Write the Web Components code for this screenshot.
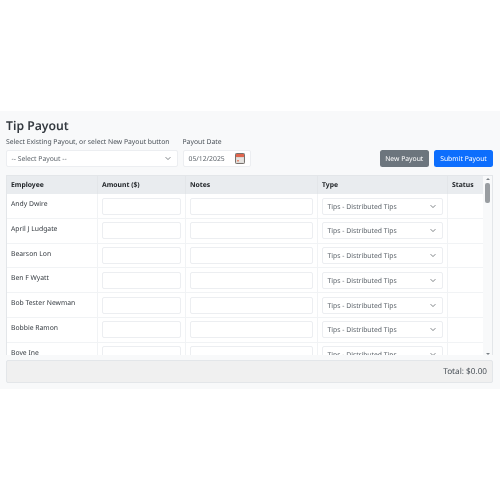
<!DOCTYPE html>
<html lang="en">
<head>
  <meta charset="UTF-8">
  <title>Tip Payout</title>
  <style>
    html, body { margin: 0; background: #fff; }
    body { padding-top: 111px; font-family: "Noto Sans", sans-serif; color: #212529; text-rendering: geometricPrecision; }
  </style>
</head>
<body>
  <tip-payout></tip-payout>

  <script>
    const chevron = `<svg width="6" height="5" viewBox="0 0 16 14"><path fill="none" stroke="#4a5056" stroke-linecap="round" stroke-linejoin="round" stroke-width="2" d="m2 4 6 6 6-6"/></svg>`;

    // dropdown look-alike, the text comes through the slot
    class TpSelect extends HTMLElement {
      constructor() {
        super();
        this.attachShadow({ mode: 'open' }).innerHTML = `
          <style>
            :host {
              display: flex; align-items: center; justify-content: space-between;
              box-sizing: border-box; height: 17px; padding: 0 6px 0 4.5px;
              background: #fff; border: 1px solid #eceef1; border-radius: 2px;
              font-size: 6.8px; color: #5c636a; white-space: nowrap; overflow: hidden;
            }
          </style>
          <slot></slot>${chevron}`;
      }
    }

    class TpButton extends HTMLElement {
      constructor() {
        super();
        this.attachShadow({ mode: 'open' }).innerHTML = `
          <style>
            :host {
              display: flex; align-items: center; justify-content: center;
              box-sizing: border-box; height: 17.5px;
              border-radius: 2.5px; font-size: 6.8px; color: #fff;
              background: #6c757d;
            }
            :host([primary]) { background: #0d6efd; }
          </style>
          <slot></slot>`;
      }
    }

    class TpField extends HTMLElement {
      constructor() {
        super();
        this.attachShadow({ mode: 'open' }).innerHTML = `
          <style>
            :host { display: flex; flex-direction: column; gap: 3px; }
            label { font-size: 6.8px; line-height: 10px; color: #495057; white-space: nowrap; }
          </style>
          <label>${this.getAttribute('label')}</label>
          <slot></slot>`;
      }
    }

    class TpDate extends HTMLElement {
      constructor() {
        super();
        this.attachShadow({ mode: 'open' }).innerHTML = `
          <style>
            :host {
              display: flex; align-items: center; justify-content: space-between;
              box-sizing: border-box; width: 68px; height: 17px; padding: 0 5px;
              background: #fff; border: 1px solid #eceef1; border-radius: 2px;
              font-size: 6.8px; color: #5c636a;
            }
          </style>
          <span>${this.getAttribute('value')}</span>
          <svg width="10" height="11" viewBox="0 0 10 11">
            <rect x=".5" y=".5" width="9" height="10" rx=".8" fill="#d9d6d3" stroke="#77716d"/>
            <rect x="1" y="1" width="8" height="3" fill="#e0654d"/>
            <rect x="1.5" y="5" width="7" height="4.5" fill="#e6e3e0"/>
            <rect x="2" y="7" width="2" height="1.5" fill="#e58a70"/>
          </svg>`;
      }
    }

    class TpRow extends HTMLElement {
      constructor() {
        super();
        this.attachShadow({ mode: 'open' }).innerHTML = `
          <style>
            :host {
              display: grid; grid-template-columns: 91px 88px 132px 130px 1fr;
              height: 24.8px; box-sizing: border-box;
              background: #fff; border-bottom: 1px solid #f1f3f5;
              font-size: 6.8px; color: #343a40;
            }
            div { box-sizing: border-box; padding: 3.5px 4px 0; border-right: 1px solid #f1f3f5; min-width: 0; }
            div:last-child { border-right: 0; }
            .name { padding: 5px 4px 0; line-height: 10px; white-space: nowrap; }
            input {
              display: block; box-sizing: border-box; width: 100%; height: 17px; margin: 0; padding: 0;
              background: #fff; border: 1px solid #eceef1; border-radius: 2px; outline: none;
            }
          </style>
          <div class="name"><slot></slot></div>
          <div><input type="text"></div>
          <div><input type="text"></div>
          <div><tp-select>Tips - Distributed Tips</tp-select></div>
          <div></div>`;
      }
    }

    class TpTable extends HTMLElement {
      constructor() {
        super();
        this.attachShadow({ mode: 'open' }).innerHTML = `
          <style>
            :host {
              display: grid; grid-template-columns: 1fr 9px; height: 180px;
              box-sizing: border-box; border: 1px solid #e3e6e9; border-bottom: 0;
              background: #fff;
            }
            .view { overflow: hidden; min-width: 0; }
            .head {
              display: grid; grid-template-columns: 91px 88px 132px 130px 1fr;
              height: 18.5px; background: #e9ecef; font-size: 6.8px; font-weight: 700; color: #212529;
            }
            .head span { padding: 0 4px; line-height: 18px; border-right: 1px solid #e3e6e9; }
            .head span:last-child { border-right: 0; }
            .bar { display: flex; flex-direction: column; align-items: center; background: #f8f9fa; padding-top: 2px; }
            .up, .down { width: 0; height: 0; border: 2px solid transparent; }
            .up { border-bottom: 2.5px solid #7b8186; border-top: 0; }
            .down { border-top: 2.5px solid #7b8186; border-bottom: 0; }
            .thumb { width: 4.5px; height: 20px; margin-top: 3px; background: #999da1; border-radius: 2px; }
            .gap { flex: 1; }
          </style>
          <div class="view">
            <div class="head"><span>Employee</span><span>Amount ($)</span><span>Notes</span><span>Type</span><span>Status</span></div>
            <slot></slot>
          </div>
          <div class="bar"><i class="up"></i><i class="thumb"></i><i class="gap"></i><i class="down"></i></div>`;
      }
    }

    class TipPayout extends HTMLElement {
      constructor() {
        super();
        const names = ['Andy Dwire', 'April J Ludgate', 'Bearson Lon', 'Ben F Wyatt', 'Bob Tester Newman', 'Bobbie Ramon', 'Bove Ine'];
        this.attachShadow({ mode: 'open' }).innerHTML = `
          <style>
            /* the reference is a downscaled capture, so everything is slightly soft */
            :host { display: block; box-sizing: border-box; height: 277.5px; padding: 6px 7px 0 6px; background: #f8f9fa; filter: blur(.3px); }
            h1 { margin: 0 0 3px; font-size: 12.2px; line-height: 17px; font-weight: 600; color: #343a40; }
            .top { display: flex; align-items: flex-end; gap: 5px; margin-bottom: 7.5px; }
            .grow { flex: 1; }
            .sel { width: 171.5px; }
            .new { width: 49.5px; }
            .submit { width: 59px; }
            .foot {
              display: flex; align-items: center; justify-content: flex-end;
              box-sizing: border-box; height: 23px; margin-top: 5px; padding: 0 5px;
              background: #f0f0f0; border: 1px solid #e3e6e9; border-radius: 2px;
              font-size: 8.2px; color: #495057;
            }
          </style>
          <h1>Tip Payout</h1>
          <div class="top">
            <tp-field label="Select Existing Payout, or select New Payout button"><tp-select class="sel">-- Select Payout --</tp-select></tp-field>
            <tp-field label="Payout Date"><tp-date value="05/12/2025"></tp-date></tp-field>
            <span class="grow"></span>
            <tp-button class="new">New Payout</tp-button>
            <tp-button class="submit" primary>Submit Payout</tp-button>
          </div>
          <tp-table>${names.map(n => `<tp-row>${n}</tp-row>`).join('')}</tp-table>
          <div class="foot">Total: $0.00</div>`;
      }
    }

    customElements.define('tp-select', TpSelect);
    customElements.define('tp-button', TpButton);
    customElements.define('tp-field', TpField);
    customElements.define('tp-date', TpDate);
    customElements.define('tp-row', TpRow);
    customElements.define('tp-table', TpTable);
    customElements.define('tip-payout', TipPayout);
  </script>
</body>
</html>
